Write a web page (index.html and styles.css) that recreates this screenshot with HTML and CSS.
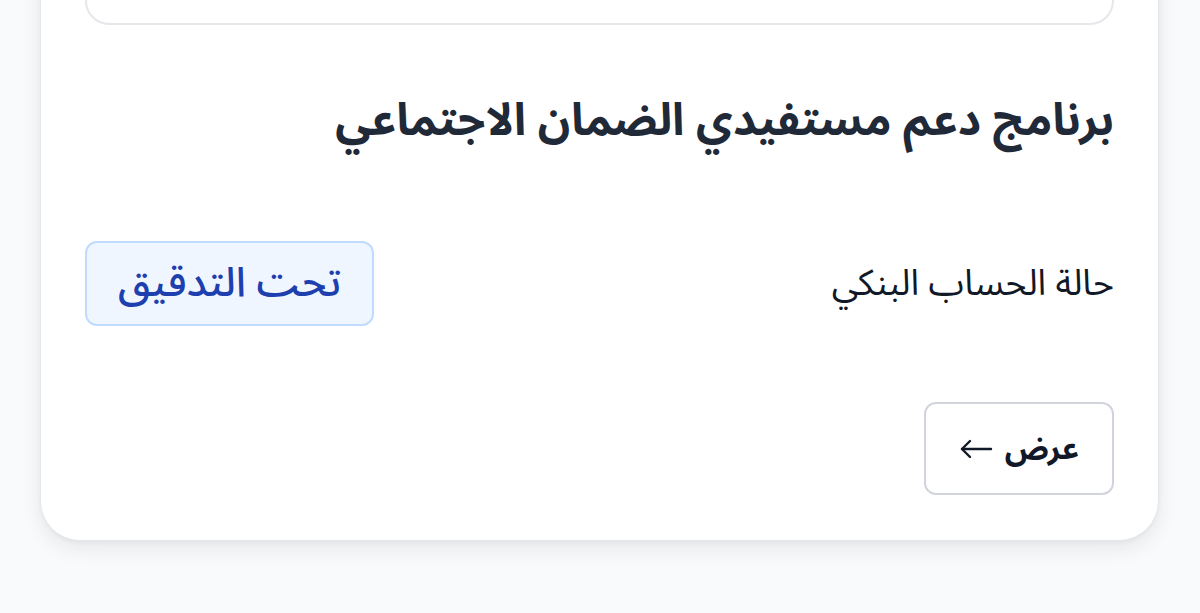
FILE: index.html
```html
<!DOCTYPE html>
<html lang="ar" dir="rtl">
<head>
  <meta charset="utf-8">
  <link rel="stylesheet" href="styles.css">
</head>
<body>
  <div class="page">
    <div class="card">
      <!-- summary box (scrolled mostly out of view) -->
      <div class="summary"></div>

      <h2 class="program-title">برنامج دعم مستفيدي الضمان الاجتماعي</h2>

      <div class="status-row">
        <span class="status-label">حالة الحساب البنكي</span>
        <span class="status-badge">تحت التدقيق</span>
      </div>

      <div class="actions">
        <button class="view-btn">
          <span>عرض</span>
          <svg class="arrow" width="34" height="20" viewBox="0 0 34 20" fill="none" stroke="#111827" stroke-width="2.4" stroke-linecap="round" stroke-linejoin="round">
            <path d="M32 10H3"/>
            <path d="M11 2L3 10l8 8"/>
          </svg>
        </button>
      </div>
    </div>
  </div>
</body>
</html>
```

FILE: styles.css
```css
body {
  margin: 0;
  background: #f9fafb;
  font-family: "Noto Sans Arabic", "DejaVu Sans", sans-serif;
  color: #111827;
  overflow: hidden;
}

.page {
  padding: 0 41px 40px 40px;
}

.card {
  margin-top: -60px;
  background: white;
  border: 1px solid #e5e7eb;
  border-radius: 40px;
  box-shadow: 0 8px 20px rgba(17, 24, 39, 0.08), 0 2px 4px rgba(17, 24, 39, 0.04);
  padding: 20px 44px 45px 44px;
}

.summary {
  height: 60px;
  border: 2px solid #e5e7eb;
  border-radius: 24px;
}

.program-title {
  margin: 64px 0 0 0;
  font-size: 45px;
  font-weight: 700;
  color: #1f2937;
  line-height: 63px;
}

.status-row {
  display: flex;
  align-items: center;
  justify-content: space-between;
  margin-top: 89px;
}

.status-label {
  font-size: 36px;
  color: #111827;
}

.status-badge {
  background: #eff6ff;
  border: 2px solid #bfdbfe;
  border-radius: 12px;
  color: #1e40af;
  font-size: 41px;
  font-weight: 500;
  padding: 16px 31px;
  line-height: 49px;
}

.actions {
  display: flex;
  margin-top: 76px;
}

.view-btn {
  font-family: inherit;
  background: white;
  border: 2px solid #d1d5db;
  border-radius: 12px;
  font-size: 31px;
  font-weight: 700;
  color: #111827;
  padding: 0 33px;
  height: 93px;
  display: flex;
  align-items: center;
  gap: 12px;
}
```
